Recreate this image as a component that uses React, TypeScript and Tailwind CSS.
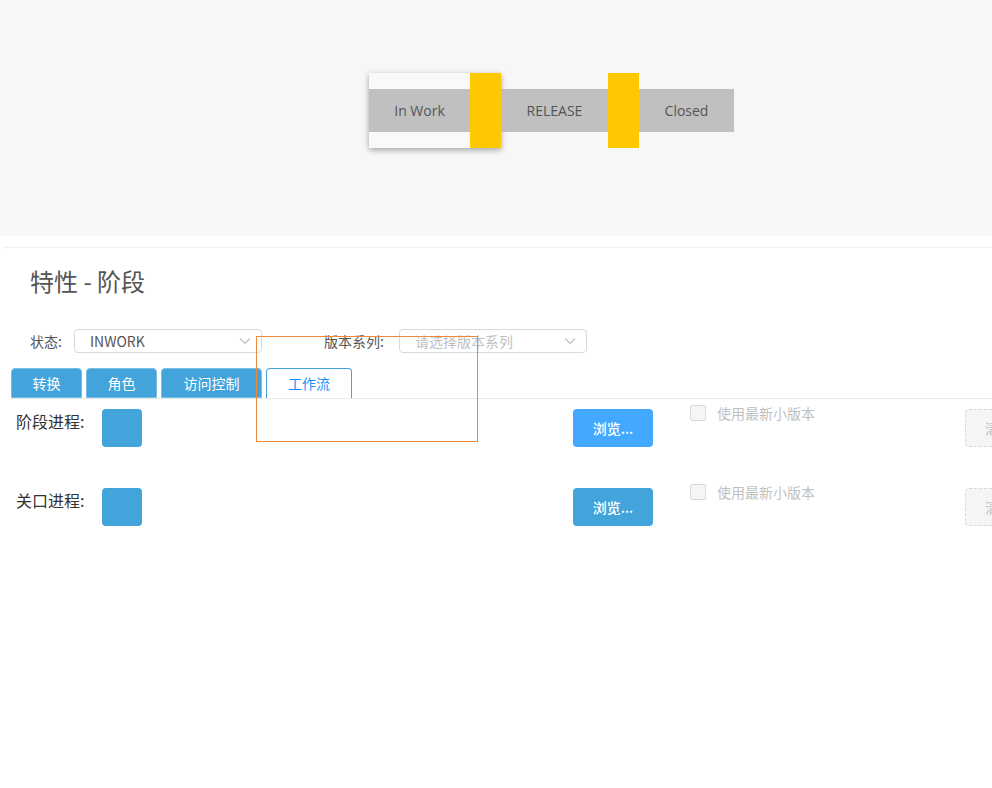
import React from "react";

const cjk = { fontFamily: '"Noto Sans CJK SC", "Noto Sans", sans-serif' };

function Chevron() {
  return (
    <svg width="12" height="8" viewBox="0 0 12 8" className="text-[#bfbfbf]">
      <path d="M1 1.5 L6 6.5 L11 1.5" fill="none" stroke="currentColor" strokeWidth="1.2" />
    </svg>
  );
}

function Select({ value, placeholder }: { value?: string; placeholder?: string }) {
  return (
    <div className="w-[188px] h-[24px] shrink-0 border border-[#d9d9d9] rounded-[4px] bg-white flex items-center justify-between pl-[15px] pr-[10px]">
      <span className={`text-[14px] leading-none ${value ? "text-[#555]" : "text-[#bfbfbf]"}`}>
        {value ?? placeholder}
      </span>
      <Chevron />
    </div>
  );
}

function Tab({ label, width, active }: { label: string; width: string; active?: boolean }) {
  return (
    <div
      className={`${width} h-[30px] shrink-0 rounded-t-[4px] flex items-center justify-center text-[14px] ${
        active
          ? "bg-white border border-[#42a4db] border-b-0 text-[#1890ff]"
          : "bg-[#42a4db] border border-[#78bde6] text-white"
      }`}
    >
      {label}
    </div>
  );
}

function ProcessRow({ label, hot }: { label: string; hot?: boolean }) {
  return (
    <div className="flex items-start h-[38px]">
      <div className="w-[86px] ml-[16px] shrink-0 text-[16px] leading-[24px] text-[#333] whitespace-nowrap">{label}</div>
      <div className="w-[40px] h-[38px] shrink-0 rounded-[4px] bg-[#42a4db]" />
      <button
        className={`ml-[431px] w-[80px] h-[38px] shrink-0 rounded-[4px] text-white text-[14px] font-medium ${
          hot ? "bg-[#42a9ff]" : "bg-[#42a4db]"
        }`}
      >
        浏览...
      </button>
      <div className="ml-[37px] -mt-[4px] w-[275px] shrink-0 flex items-center">
        <div className="w-[16px] h-[16px] shrink-0 rounded-[2px] border border-[#d9d9d9] bg-[#f5f5f5]" />
        <span className="ml-[11px] text-[14px] text-[#bfbfbf] leading-none whitespace-nowrap">使用最新小版本</span>
      </div>
      <div className="w-[80px] h-[38px] shrink-0 rounded-[4px] border border-dashed border-[#d9d9d9] bg-[#f5f5f5] flex items-center pl-[19px] text-[14px] text-[#bfbfbf] whitespace-nowrap">
        清除
      </div>
    </div>
  );
}

export default function App() {
  return (
    <div className="relative w-[992px] h-[788px] overflow-hidden bg-white" style={cjk}>
      {/* workflow diagram */}
      <div className="h-[236px] bg-[#f7f7f7] pl-[369px] pt-[73px]">
        <div className="flex items-center" style={{ fontFamily: '"Open Sans", "Noto Sans CJK SC", sans-serif' }}>
          <div className="flex items-center h-[75px] bg-[#f9f9f9] shadow-[0_2px_6px_rgba(0,0,0,0.35)]">
            <div className="w-[101px] h-[43px] bg-[#c0c0c0] flex items-center justify-center text-[14px] text-[#555]">
              In Work
            </div>
            <div className="w-[31px] h-[75px] bg-[#ffc800]" />
          </div>
          <div className="w-[107px] h-[43px] bg-[#c0c0c0] flex items-center justify-center text-[14px] text-[#555]">
            RELEASE
          </div>
          <div className="w-[31px] h-[75px] bg-[#ffc800]" />
          <div className="w-[95px] h-[43px] bg-[#c0c0c0] flex items-center justify-center text-[14px] text-[#555]">
            Closed
          </div>
        </div>
      </div>

      {/* properties card */}
      <div className="mt-[11px] border-t border-[#fbeeee] rounded-tl-[6px] pt-[17px]">
        <div className="pl-[30px] text-[24px] text-[#555] leading-[32px]">特性 - 阶段</div>

        <div className="mt-[32px] flex items-center h-[24px]">
          <span className="ml-[30px] w-[44px] shrink-0 text-[14px] text-[#555]">状态:</span>
          <Select value="INWORK" />
          <span className="ml-[62px] w-[75px] shrink-0 text-[14px] text-[#555]">版本系列:</span>
          <Select placeholder="请选择版本系列" />
        </div>

        <div className="mt-[15px] ml-[11px] flex items-end gap-[4px] border-b border-[#e8e8e8]">
          <Tab label="转换" width="w-[71px]" />
          <Tab label="角色" width="w-[71px]" />
          <Tab label="访问控制" width="w-[101px]" />
          <Tab label="工作流" width="w-[86px]" active />
        </div>

        <div className="mt-[10px] flex flex-col gap-[41px]">
          <ProcessRow label="阶段进程:" hot />
          <ProcessRow label="关口进程:" />
        </div>
      </div>

      {/* selection outline */}
      <div className="absolute left-[256px] top-[336px] w-[222px] h-[106px] border border-[#f0883a] pointer-events-none" />
    </div>
  );
}
